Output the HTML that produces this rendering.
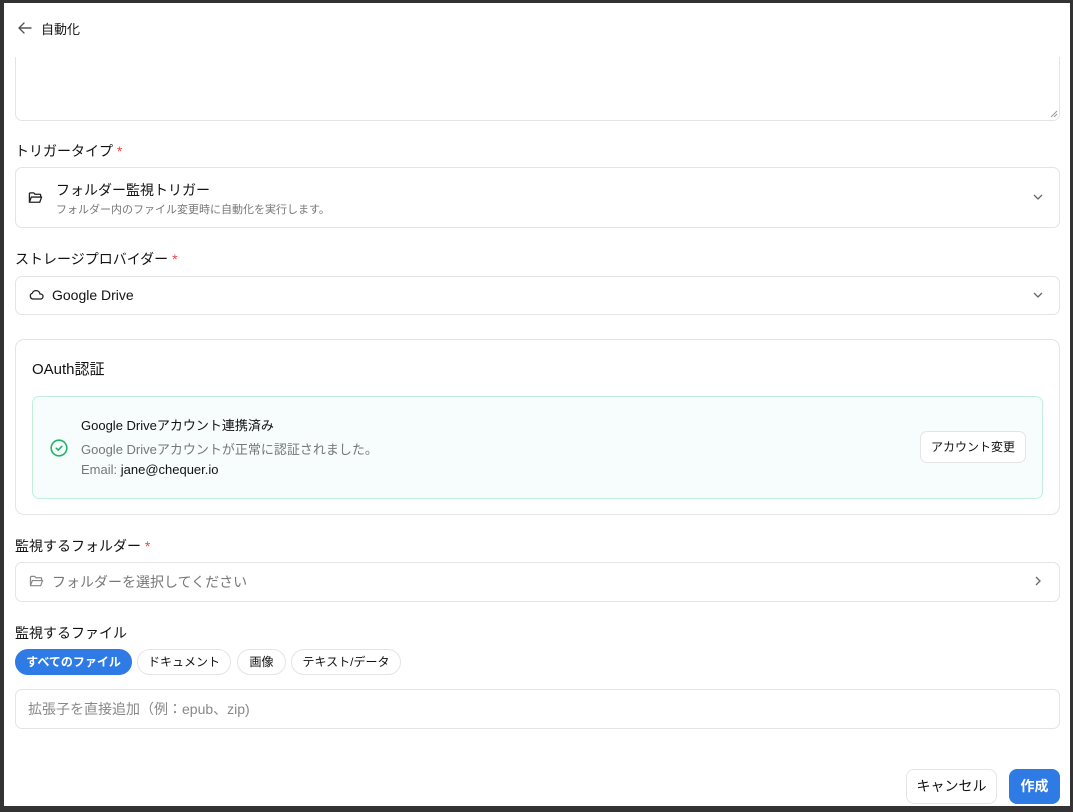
<!DOCTYPE html>
<html><head><meta charset="utf-8"><style>
*{box-sizing:border-box;margin:0;padding:0}
body{width:1073px;height:812px;overflow:hidden;background:#333;font-family:"Liberation Sans","Noto Sans CJK JP",sans-serif;color:#111;position:relative}
.frame{position:absolute;left:4px;top:3px;width:1066px;height:803px;background:#fff;overflow:hidden}
.a{position:absolute}
.box{position:absolute;border:1px solid #e4e4e7;border-radius:7px;background:#fff}
.lbl{position:absolute;font-size:14px;color:#111}
.req{color:#ef4444}
.chip{position:absolute;top:646px;height:26px;border:1px solid #e4e4e7;border-radius:13px;font-size:12px;line-height:24px;text-align:center;background:#fff}
</style></head><body><div class="frame">
<div class="box" style="left:11px;top:20px;width:1045px;height:98px"></div>
<svg style="position:absolute;right:12px;top:107px" width="8" height="8" viewBox="0 0 8 8"><path d="M7 1L1 7M7 4L4 7" stroke="#999" stroke-width="1"/></svg>
<div class="a" style="left:0;top:0;width:1066px;height:54px;background:#fff"></div>
<svg class="a" style="left:13px;top:17px" width="16" height="16" viewBox="0 0 16 16" fill="none" stroke="#555" stroke-width="1.4" stroke-linecap="round" stroke-linejoin="round"><path d="M14 8H2M7 3L2 8l5 5"/></svg>
<div class="a" style="left:37px;top:16px;font-size:13px">自動化</div>

<div class="lbl" style="left:11px;top:138px">トリガータイプ <span class="req">*</span></div>
<div class="box" style="left:11px;top:164px;width:1045px;height:61px"></div>
<svg class="a" style="left:24px;top:188px" width="15" height="14" viewBox="0 0 16 14" fill="none" stroke="#222" stroke-width="1.4" stroke-linejoin="round"><path d="M1.5 11.5V2.5a1 1 0 011-1h3.5l1.5 1.5h5a1 1 0 011 1v1.5M1.5 11.5l2-5.5h11l-2 5.5z"/></svg>
<div class="a" style="left:52px;top:177px;font-size:14px">フォルダー監視トリガー</div>
<div class="a" style="left:52px;top:198px;font-size:11px;color:#777">フォルダー内のファイル変更時に自動化を実行します。</div>
<svg class="a" style="left:1028px;top:190px" width="12" height="8" viewBox="0 0 12 8" fill="none" stroke="#666" stroke-width="1.3"><path d="M2 2l4 4 4-4"/></svg>

<div class="lbl" style="left:11px;top:246px">ストレージプロバイダー <span class="req">*</span></div>
<div class="box" style="left:11px;top:273px;width:1045px;height:39px"></div>
<svg class="a" style="left:25px;top:286px" width="15" height="11" viewBox="0 0 15 11" fill="none" stroke="#222" stroke-width="1.3"><path d="M4 10h7.5a2.5 2.5 0 000-5h-.5A4 4 0 003.3 4.2 3 3 0 004 10z"/></svg>
<div class="a" style="left:48px;top:284px;font-size:14px">Google Drive</div>
<svg class="a" style="left:1028px;top:288px" width="12" height="8" viewBox="0 0 12 8" fill="none" stroke="#666" stroke-width="1.3"><path d="M2 2l4 4 4-4"/></svg>

<div class="box" style="left:11px;top:336px;width:1045px;height:176px;border-radius:9px"></div>
<div class="a" style="left:28px;top:355px;font-size:15px">OAuth認証</div>
<div class="a" style="left:28px;top:393px;width:1011px;height:103px;background:#f6fdfc;border:1px solid #c3eedc;border-radius:7px"></div>
<svg class="a" style="left:46px;top:436px" width="18" height="18" viewBox="0 0 18 18" fill="none" stroke="#22b36a" stroke-width="1.6" stroke-linecap="round" stroke-linejoin="round"><circle cx="9" cy="9" r="7.8"/><path d="M6.2 9.2l2 1.9 3.6-3.8"/></svg>
<div class="a" style="left:77px;top:412px;font-size:13px">Google Driveアカウント連携済み</div>
<div class="a" style="left:77px;top:436px;font-size:13px;color:#777">Google Driveアカウントが正常に認証されました。</div>
<div class="a" style="left:77px;top:459px;font-size:13px;color:#777">Email: <span style="color:#111">jane@chequer.io</span></div>
<div class="a" style="left:916px;top:428px;width:106px;height:32px;border:1px solid #e4e4e7;border-radius:7px;background:#fff;font-size:12px;line-height:30px;text-align:center">アカウント変更</div>

<div class="lbl" style="left:11px;top:533px">監視するフォルダー <span class="req">*</span></div>
<div class="box" style="left:11px;top:559px;width:1045px;height:40px"></div>
<svg class="a" style="left:25px;top:572px" width="15" height="13" viewBox="0 0 16 14" fill="none" stroke="#888" stroke-width="1.3" stroke-linejoin="round"><path d="M1.5 11.5V2.5a1 1 0 011-1h3.5l1.5 1.5h5a1 1 0 011 1v1.5M1.5 11.5l2-5.5h11l-2 5.5z"/></svg>
<div class="a" style="left:48px;top:569px;font-size:14px;color:#777">フォルダーを選択してください</div>
<svg class="a" style="left:1030px;top:572px" width="8" height="12" viewBox="0 0 8 12" fill="none" stroke="#666" stroke-width="1.3"><path d="M2 2l4 4-4 4"/></svg>

<div class="lbl" style="left:11px;top:620px">監視するファイル</div>
<div class="chip" style="left:11px;width:117px;background:#2e7be6;border-color:#2e7be6;color:#fff;font-weight:bold">すべてのファイル</div>
<div class="chip" style="left:133px;width:94px">ドキュメント</div>
<div class="chip" style="left:233px;width:49px">画像</div>
<div class="chip" style="left:287px;width:110px">テキスト/データ</div>
<div class="box" style="left:11px;top:686px;width:1045px;height:40px"></div>
<div class="a" style="left:24px;top:696px;font-size:14px;color:#888">拡張子を直接追加（例：epub、zip)</div>

<div class="a" style="left:902px;top:766px;width:91px;height:35px;border:1px solid #e4e4e7;border-radius:8px;font-size:14px;line-height:33px;text-align:center;background:#fff">キャンセル</div>
<div class="a" style="left:1005px;top:766px;width:51px;height:35px;border-radius:8px;background:#2e7be6;color:#fff;font-size:14px;font-weight:bold;line-height:35px;text-align:center">作成</div>
</div></body></html>
